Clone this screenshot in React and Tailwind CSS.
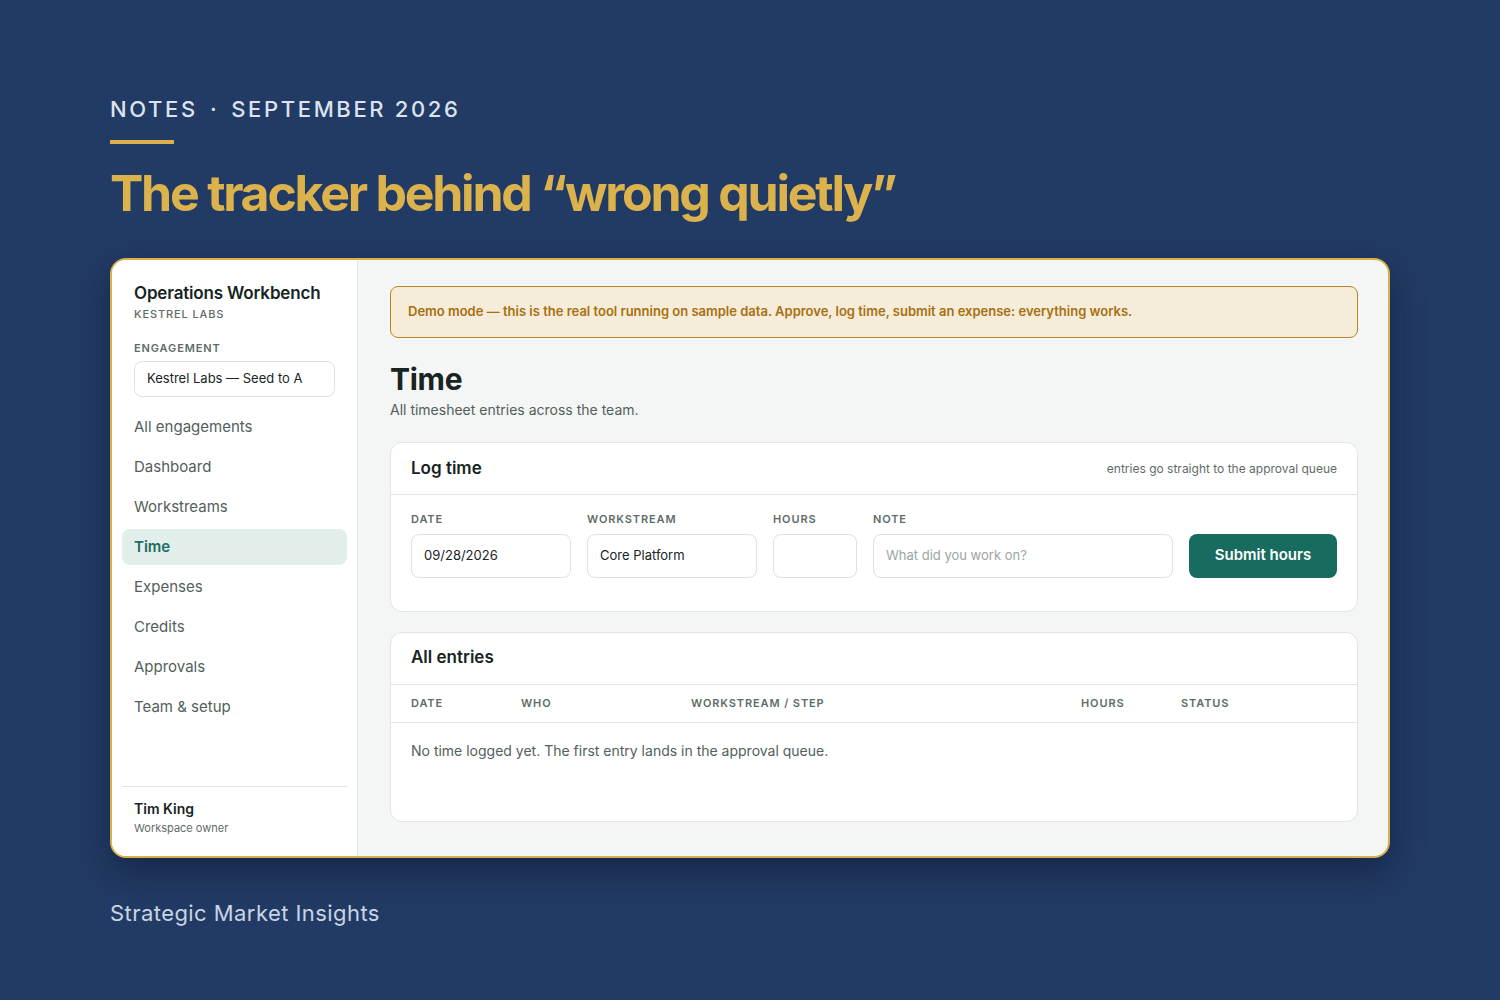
import React from 'react';

const NAV = ['All engagements', 'Dashboard', 'Workstreams', 'Time', 'Expenses', 'Credits', 'Approvals', 'Team & setup'];

function Sidebar() {
  return (
    <aside className="w-[246px] shrink-0 bg-white border-r border-[#e3e8e6] flex flex-col px-[10px] pt-[21px] pb-5">
      <div className="px-3">
        <h2 className="text-[17px] font-semibold leading-6 tracking-[-0.01em] whitespace-nowrap text-[#17241f]">Operations Workbench</h2>
        <p className="text-[11px] font-medium tracking-[0.08em] text-[#5e6c67] mt-[1px]">KESTREL LABS</p>
        <p className="text-[11px] font-semibold tracking-[0.08em] text-[#5e6c67] mt-[17px]">ENGAGEMENT</p>
        <div className="mt-[5px] h-[36px] rounded-lg border border-[#dbe2df] flex items-center px-3 text-[13px] text-[#17241f]">
          Kestrel Labs — Seed to A
        </div>
      </div>
      <nav className="mt-[12px] flex flex-col gap-1">
        {NAV.map(item => (
          <div
            key={item}
            className={`h-[36px] rounded-lg px-3 flex items-center text-[15px] ${
              item === 'Time' ? 'bg-[#e2eeea] text-[#1d6b5e] font-semibold' : 'text-[#52605b]'
            }`}
          >
            {item}
          </div>
        ))}
      </nav>
      <div className="mt-auto border-t border-[#dde4e1] px-3 pt-[11px]">
        <p className="text-[14px] font-semibold text-[#17241f]">Tim King</p>
        <p className="text-[11px] text-[#5e6c67] mt-[1px]">Workspace owner</p>
      </div>
    </aside>
  );
}

function Field({ label, width, value, placeholder }) {
  return (
    <div className={width}>
      <p className="text-[11px] font-semibold tracking-[0.08em] text-[#5e6c67] mb-[6px]">{label}</p>
      <div className="h-[44px] rounded-lg border border-[#dbe2df] bg-white flex items-center px-3 text-[13px]">
        {value ? <span className="text-[#17241f]">{value}</span> : <span className="text-[#9aa5a1]">{placeholder}</span>}
      </div>
    </div>
  );
}

function LogTime() {
  return (
    <section className="bg-white border border-[#dfe5e3] rounded-xl">
      <header className="h-[52px] border-b border-[#dfe5e3] px-5 flex items-center justify-between">
        <h3 className="text-[17px] font-semibold text-[#17241f]">Log time</h3>
        <span className="text-[12px] text-[#5e6c67]">entries go straight to the approval queue</span>
      </header>
      <div className="px-5 pt-[16px] pb-[33px] flex items-end gap-[16px]">
        <Field label="DATE" width="w-[160px]" value="09/28/2026" />
        <Field label="WORKSTREAM" width="w-[170px]" value="Core Platform" />
        <Field label="HOURS" width="w-[84px]" />
        <Field label="NOTE" width="w-[300px]" placeholder="What did you work on?" />
        <button className="ml-auto h-[44px] w-[148px] rounded-lg bg-[#176b5f] text-white text-[15px] font-semibold">
          Submit hours
        </button>
      </div>
    </section>
  );
}

function Entries() {
  const cols = ['DATE', 'WHO', 'WORKSTREAM / STEP', 'HOURS', 'STATUS'];
  return (
    <section className="bg-white border border-[#dfe5e3] rounded-xl h-[190px]">
      <header className="h-[52px] border-b border-[#dfe5e3] px-5 flex items-center">
        <h3 className="text-[17px] font-semibold text-[#17241f]">All entries</h3>
      </header>
      <div className="h-[38px] border-b border-[#dfe5e3] px-5 grid grid-cols-[110px_170px_390px_100px_1fr] items-center">
        {cols.map(c => (
          <span key={c} className="text-[11px] font-semibold tracking-[0.08em] text-[#5e6c67]">{c}</span>
        ))}
      </div>
      <p className="px-5 pt-[17px] text-[14px] text-[#52605b]">
        No time logged yet. The first entry lands in the approval queue.
      </p>
    </section>
  );
}

export default function App() {
  return (
    <div className="min-h-screen w-full bg-[#223b65] font-['Inter',sans-serif] pt-[94px] px-[110px]">
      <p className="text-[22px] font-medium tracking-[0.12em] text-[#dce3ee] leading-[30px]">
        NOTES<span className="mx-[12px]">·</span>SEPTEMBER 2026
      </p>
      <div className="mt-[16px] w-[64px] h-[4px] bg-[#d9b04d]" />
      <h1 className="mt-[18px] text-[50px] font-bold tracking-[-0.045em] leading-[62px] text-[#dcb24d]">
        The tracker behind “wrong quietly”
      </h1>

      <div className="mt-[34px] w-[1280px] h-[600px] rounded-2xl border-2 border-[#d9b04d] bg-[#f4f6f5] overflow-hidden flex shadow-[0_14px_34px_rgba(8,18,38,0.45)]">
        <Sidebar />
        <main className="flex-1 px-8 pt-[26px]">
          <div className="h-[52px] rounded-lg border border-[#b98327] bg-[#f6ecda] flex items-center px-[17px] text-[13px] font-semibold text-[#a8700f]">
            Demo mode — this is the real tool running on sample data. Approve, log time, submit an expense: everything works.
          </div>
          <h2 className="mt-[22px] text-[30px] font-bold tracking-[-0.01em] leading-[38px] text-[#17241f]">Time</h2>
          <p className="mt-[1px] text-[14px] text-[#52605b]">All timesheet entries across the team.</p>
          <div className="mt-[22px] flex flex-col gap-5">
            <LogTime />
            <Entries />
          </div>
        </main>
      </div>

      <p className="mt-[39px] text-[22px] tracking-[0.02em] text-[#c9d4e4]">Strategic Market Insights</p>
    </div>
  );
}
